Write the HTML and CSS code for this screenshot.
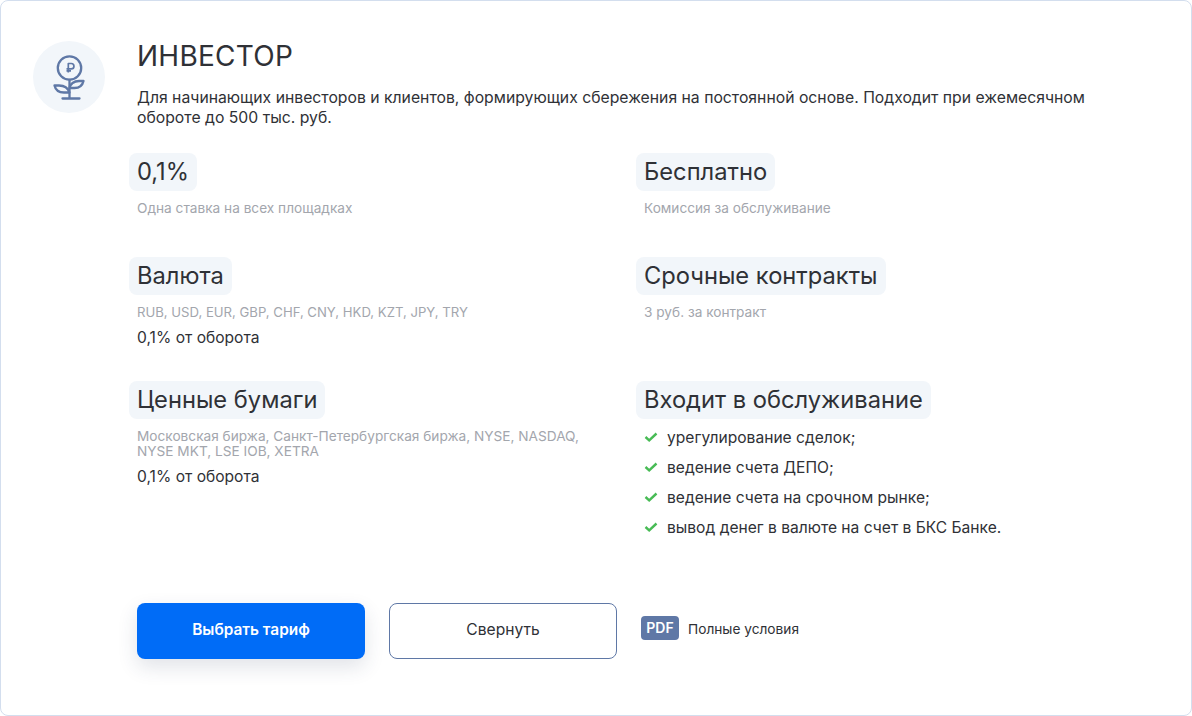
FILE: index.html
```html
<!DOCTYPE html>
<html lang="ru">
<head>
<meta charset="utf-8">
<title>Инвестор</title>
<link rel="stylesheet" href="styles.css">
</head>
<body>
<main class="card">
  <div class="icon-wrap">
    <svg class="plant" width="72" height="72" viewBox="0 0 72 72" fill="none" stroke="#5f78a6" stroke-width="2.300" stroke-linecap="round" stroke-linejoin="round">
      <circle cx="36.500" cy="27" r="11.700"/>
      <path d="M35.300 31.500v-9h3a2.600 2.600 0 0 1 0 5.300h-4.800M33.500 29.800h4.500" stroke-width="1.700" stroke-linecap="butt"/>
      <path d="M36.500 39v18.500M29.500 57.500h17"/>
      <path d="M36.500 51.500C35 47 31 44.500 26 44.500h-4.500c1 4.500 4.500 7 9.500 7z"/>
      <path d="M36.500 47c.500-4 4.500-7 9.500-7h4.500c-1 4.500-4.500 7-9 7z"/>
    </svg>
  </div>
  <div class="content">
    <h1 class="title">ИНВЕСТОР</h1>
    <p class="lead">Для начинающих инвесторов и клиентов, формирующих сбережения на постоянной основе. Подходит при ежемесячном обороте до 500 тыс. руб.</p>
    <div class="grid">
      <section class="item row-1">
        <h2 class="pill">0,1%</h2>
        <p class="note">Одна ставка на всех площадках</p>
      </section>
      <section class="item row-1">
        <h2 class="pill">Бесплатно</h2>
        <p class="note">Комиссия за обслуживание</p>
      </section>
      <section class="item row-2">
        <h2 class="pill">Валюта</h2>
        <p class="note note-latin">RUB, USD, EUR, GBP, CHF, CNY, HKD, KZT, JPY, TRY</p>
        <p class="value">0,1% от оборота</p>
      </section>
      <section class="item row-2">
        <h2 class="pill">Срочные контракты</h2>
        <p class="note">3 руб. за контракт</p>
      </section>
      <section class="item row-3">
        <h2 class="pill">Ценные бумаги</h2>
        <p class="note">Московская биржа, Санкт-Петербургская биржа, NYSE, NASDAQ, NYSE MKT, LSE IOB, XETRA</p>
        <p class="value">0,1% от оборота</p>
      </section>
      <section class="item row-3">
        <h2 class="pill">Входит в обслуживание</h2>
        <ul class="checks">
          <li><svg class="check" width="14" height="10" viewBox="0 0 14 10" fill="none" stroke="#48bb55" stroke-width="2.400"><path d="M1.500 5l3.700 3.300L12.500 1.500"/></svg>урегулирование сделок;</li>
          <li><svg class="check" width="14" height="10" viewBox="0 0 14 10" fill="none" stroke="#48bb55" stroke-width="2.400"><path d="M1.500 5l3.700 3.300L12.500 1.500"/></svg>ведение счета ДЕПО;</li>
          <li><svg class="check" width="14" height="10" viewBox="0 0 14 10" fill="none" stroke="#48bb55" stroke-width="2.400"><path d="M1.500 5l3.700 3.300L12.500 1.500"/></svg>ведение счета на срочном рынке;</li>
          <li><svg class="check" width="14" height="10" viewBox="0 0 14 10" fill="none" stroke="#48bb55" stroke-width="2.400"><path d="M1.500 5l3.700 3.300L12.500 1.500"/></svg>вывод денег в валюте на счет в БКС Банке.</li>
        </ul>
      </section>
    </div>
    <div class="actions">
      <button class="btn btn-primary" type="button">Выбрать тариф</button>
      <button class="btn btn-outline" type="button">Свернуть</button>
      <a class="pdf-link" href="#"><span class="pdf">PDF</span><span class="pdf-text">Полные условия</span></a>
    </div>
  </div>
</main>
</body>
</html>
```
FILE: styles.css
```css
* { box-sizing: border-box; }
html, body { margin: 0; padding: 0; background: #fff; }
body { font-family: Inter, "Noto Sans", sans-serif; color: #2f3136; }
.card {
  display: flex;
  width: 1192px;
  height: 716px;
  padding: 40px 32px 0 32px;
  border: 1px solid #d3deee;
  border-radius: 8px;
  background: #fff;
  overflow: hidden;
}
.icon-wrap {
  flex: none;
  width: 72px;
  height: 72px;
  border-radius: 50%;
  background: #f2f6fa;
}
.plant { display: block; }
.content { flex: 1; margin-left: 32px; min-width: 0; }
.title { margin: 0; font-size: 28px; line-height: 30px; font-weight: 400; letter-spacing: 0.25px; }
.lead { margin: 17px 0 0; width: 960px; font-size: 15.750px; line-height: 20px; }
.grid {
  display: grid;
  grid-template-columns: 507px 1fr;
  margin-top: 25px;
}
.row-1 { height: 104px; }
.row-2 { height: 124px; }
.row-3 { height: 222px; }
.pill {
  display: table;
  margin: 0 0 0 -8px;
  padding: 0 8px;
  height: 38px;
  line-height: 38px;
  border-radius: 8px;
  background: #f2f6fa;
  font-size: 23.700px;
  font-weight: 400;
}
.note { margin: 10px 0 0; width: 460px; font-size: 13.660px; line-height: 15px; color: #a3a6ad; }
.note-latin { font-size: 13.150px; }
.value { margin: 8px 0 0; font-size: 15.600px; line-height: 19px; }
.checks { list-style: none; margin: 3px 0 0; padding: 0; }
.checks li { display: flex; align-items: center; height: 30px; font-size: 15.600px; }
.check { flex: none; margin-right: 9px; }
.actions { display: flex; align-items: center; }
.btn {
  width: 228px;
  height: 56px;
  padding-bottom: 5px;
  border-radius: 8px;
  font-family: inherit;
}
.btn-primary {
  border: 0;
  background: #006cf7;
  color: #fff;
  font-size: 15.400px;
  font-weight: 600;
  box-shadow: 0 8px 20px rgba(40, 60, 90, 0.14);
}
.btn-outline {
  margin-left: 24px;
  border: 1px solid #5f78a6;
  background: #fff;
  color: #2f3136;
  font-size: 15.600px;
}
.pdf-link {
  display: flex;
  align-items: center;
  margin: 0 0 6px 24px;
  font-size: 13.700px;
  color: #2f3136;
  text-decoration: none;
}
.pdf {
  width: 38px;
  height: 24px;
  margin-right: 9px;
  border-radius: 4px;
  background: #5f78a6;
  color: #fff;
  font-size: 14px;
  font-weight: 600;
  line-height: 24px;
  text-align: center;
}
.pdf-text { padding-top: 2px; }
```
